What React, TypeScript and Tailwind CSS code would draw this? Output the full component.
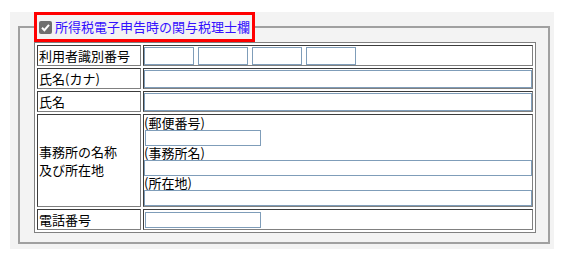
import React from 'react';

const cellL = "h-[21px] border border-t-[#3c3c3c] border-l-[#3c3c3c] border-r-[#808080] border-b-[#808080] pl-[1px] align-middle text-left";
const cellR = "h-[21px] border border-t-[#3c3c3c] border-l-[#3c3c3c] border-r-[#808080] border-b-[#808080] p-0 align-middle";
const box = "block bg-white border border-[#7f9db9] outline-none";

function Check() {
  return (
    <span className="w-[13px] h-[13px] rounded-[2px] bg-[#6f6f6f] flex items-center justify-center shrink-0">
      <svg width="11" height="11" viewBox="0 0 11 11">
        <path d="M2 5.8 L4.4 8.2 L9 2.8" fill="none" stroke="#fff" strokeWidth="2" />
      </svg>
    </span>
  );
}

export default function App() {
  return (
    <div className="w-[562px] h-[259px] bg-white pt-[15px] pl-[10px] font-['Noto_Sans_CJK_JP',sans-serif] text-black">
      <div className="w-[544px] h-[237px] bg-[#f3f3f3] pl-[8px] pr-[5px]">
        <fieldset className="-mt-[3px] w-[531px] h-[232px] border-2 border-[#a0a0a0] pl-[14px] pr-[12px]">
          <legend className="w-[221px] border-[3px] border-[#ff0000] h-[30px] pl-[2px] pr-[2px]">
            <span className="flex items-center h-[24px] gap-[3px]">
              <Check />
              <span className="text-[13px] leading-[16px] text-[#3311ff] whitespace-nowrap">所得税電子申告時の関与税理士欄</span>
            </span>
          </legend>
          <table className="w-[502px] table-fixed border-separate border-spacing-[2px] border border-[#808080] bg-white text-[13px] leading-[15px]">
            <tbody>
              <tr>
                <td className={cellL + " w-[104px]"}>利用者識別番号</td>
                <td className={cellR}>
                  <div className="flex gap-[4px]">
                    <input readOnly className={box + " w-[50px] h-[18px]"} />
                    <input readOnly className={box + " w-[50px] h-[18px]"} />
                    <input readOnly className={box + " w-[50px] h-[18px]"} />
                    <input readOnly className={box + " w-[50px] h-[18px]"} />
                  </div>
                </td>
              </tr>
              <tr>
                <td className={cellL}>氏名(カナ)</td>
                <td className={cellR}><input readOnly className={box + " w-full h-[18px]"} /></td>
              </tr>
              <tr>
                <td className={cellL}>氏名</td>
                <td className={cellR}><input readOnly className={box + " w-full h-[18px]"} /></td>
              </tr>
              <tr>
                <td className={cellL + " leading-[18px]"}>事務所の名称<br />及び所在地</td>
                <td className={cellR + " pt-[1px]"}>
                  <div className="flex flex-col">
                    <span className="leading-[14px]">(郵便番号)</span>
                    <input readOnly className={box + " w-[116px] h-[16px] ml-[1px]"} />
                    <span className="leading-[14px]">(事務所名)</span>
                    <input readOnly className={box + " w-full h-[16px]"} />
                    <span className="leading-[14px]">(所在地)</span>
                    <input readOnly className={box + " w-full h-[16px]"} />
                  </div>
                </td>
              </tr>
              <tr>
                <td className={cellL}>電話番号</td>
                <td className={cellR}><input readOnly className={box + " w-[116px] h-[16px] ml-[1px]"} /></td>
              </tr>
            </tbody>
          </table>
        </fieldset>
      </div>
    </div>
  );
}
